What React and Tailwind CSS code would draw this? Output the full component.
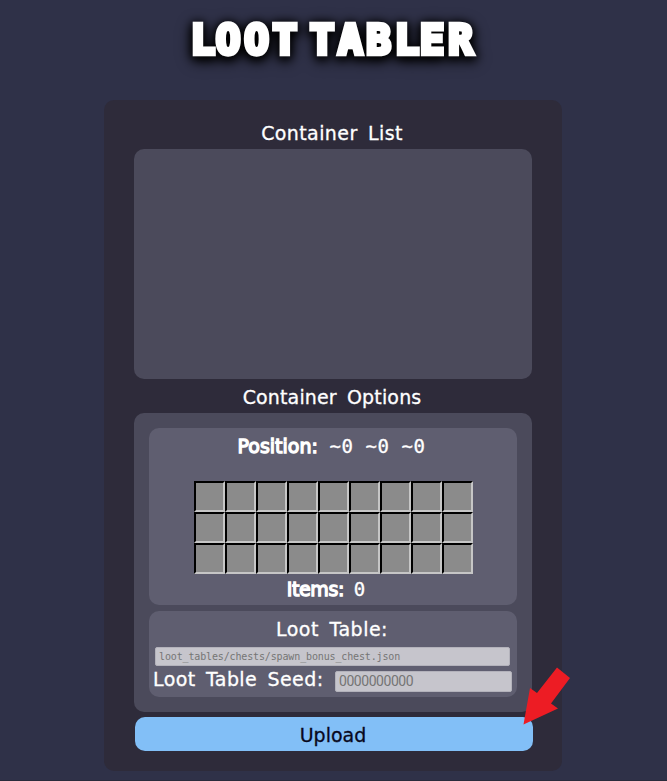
const SLOTS = Array.from({ length: 27 }, (_, i) => i);

function Heading({ children, className = "" }) {
  return (
    <h2 className={`whitespace-nowrap text-center text-[19px] leading-6 ${className}`}>
      {children}
    </h2>
  );
}

function Title() {
  return (
    <h1 className="flex h-[78px] justify-center whitespace-nowrap font-['DejaVu_Sans_Mono',monospace] text-[41px] font-bold leading-[81px] tracking-[3.6px] [-webkit-text-stroke:4.5px_white] [filter:drop-shadow(0_2px_5px_black)_drop-shadow(0_2px_6px_black)]">
      <span className="tracking-[0.6px]">L</span>
      <span>OOT</span>
      <span className="ml-[9px]">TAB</span>
      <span className="tracking-[0.6px]">L</span>
      <span>ER</span>
    </h1>
  );
}

function Inventory() {
  return (
    <div className="mx-auto grid w-[279px] grid-cols-9">
      {SLOTS.map((slot) => (
        <div
          key={slot}
          className="h-[31px] border-2 border-b-[#c6c6c6] border-l-black border-r-[#c6c6c6] border-t-black bg-[#8b8b8b]"
        />
      ))}
    </div>
  );
}

function Arrow() {
  return (
    <svg className="absolute left-[520px] top-[664px]" width="54" height="64" viewBox="520 664 54 64">
      <path d="M523.5 724.5 530 688 537 693 557 667.5 570 678 551 703.5 558 708.5Z" fill="#ed1c24" />
    </svg>
  );
}

export default function App() {
  return (
    <div className="relative h-[781px] w-[667px] overflow-hidden border-b border-[#292b3b] bg-[#2f3148] font-['DejaVu_Sans',sans-serif] text-white [-webkit-text-stroke:0.3px]">
      <Title />
      <main className="ml-[104px] mt-[22px] h-[671px] w-[458px] rounded-[10px] bg-[#2e2b3a] px-[30px] pt-[21px]">
        <Heading className="pr-0.5 tracking-[0.4px] [word-spacing:4px]">Container List</Heading>
        <div className="mt-1 h-[230px] rounded-[10px] bg-[#4b4a5b]" />
        <Heading className="mt-1.5 pr-0.5 tracking-[0.15px] [word-spacing:4px]">Container Options</Heading>

        <section className="mt-1 h-[299px] rounded-[10px] bg-[#4b4a5b] p-[15px]">
          <div className="h-[177px] rounded-[10px] bg-[#5f5e70] pt-1.5">
            <div className="flex h-[47px] justify-center whitespace-nowrap pr-[3px] text-[19px] leading-6">
              <b className="w-[92px] font-normal [-webkit-text-stroke:1.3px]">Position:</b>
              <span className="font-['DejaVu_Sans_Mono',monospace] tracking-[0.56px]">~0 ~0 ~0</span>
            </div>
            <Inventory />
            <div className="mt-[3px] flex justify-center pr-[14px] text-[19px] leading-6">
              <b className="w-[67px] font-normal tracking-[-0.4px] [-webkit-text-stroke:1.3px]">Items:</b>
              <span className="font-['DejaVu_Sans_Mono',monospace]">0</span>
            </div>
          </div>

          <div className="mt-1.5 h-[86px] rounded-[10px] bg-[#5f5e70] pt-1.5">
            <Heading className="pr-0.5 tracking-[0.5px] [word-spacing:4px]">Loot Table:</Heading>
            <input
              className="ml-1.5 mt-1.5 block h-[19px] w-[355px] rounded-[2px] border border-[#b3b2bb] bg-[#c6c5cc] pl-[3px] font-['DejaVu_Sans_Mono',monospace] text-[10px] tracking-[-0.14px] [-webkit-text-stroke:0px] placeholder:overflow-visible placeholder:pb-1 placeholder:pt-[3px] placeholder:text-[#757575]"
              placeholder="loot_tables/chests/spawn_bonus_chest.json"
            />
            <div className="flex pl-1 pt-px">
              <label className="w-[182px] whitespace-nowrap text-[19px] leading-6 tracking-[0.4px] [word-spacing:4px]">
                Loot Table Seed:
              </label>
              <input
                className="mt-[4px] h-[21px] w-[177px] rounded-[2px] border border-[#b3b2bb] bg-[#c6c5cc] pb-px pl-[3px] font-['Roboto',sans-serif] text-[14px] tracking-[-0.45px] [-webkit-text-stroke:0px] placeholder:text-[#757575]"
                placeholder="0000000000"
              />
            </div>
          </div>
        </section>

        <button className="ml-px mt-[5px] block h-[34px] w-[398px] rounded-[10px] bg-[#82bff7] pr-0.5 pt-px text-[19px] leading-6 text-[#08081c]">
          Upload
        </button>
      </main>
      <Arrow />
    </div>
  );
}
